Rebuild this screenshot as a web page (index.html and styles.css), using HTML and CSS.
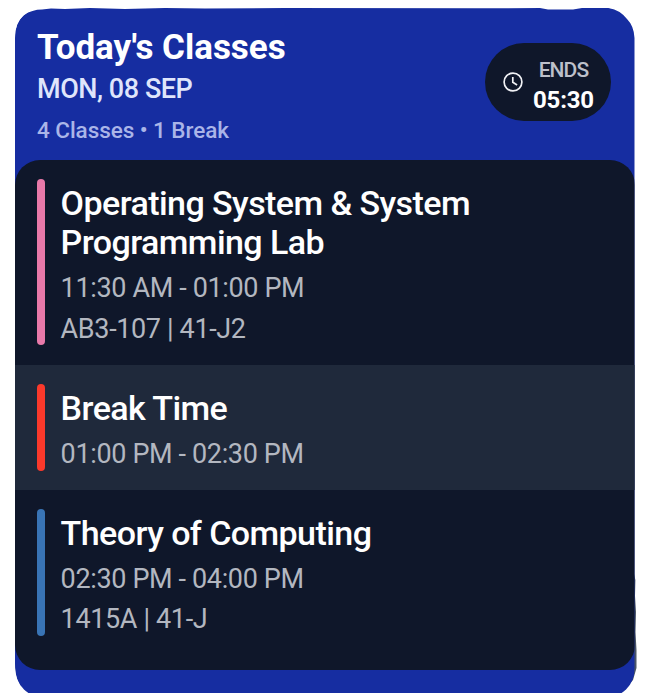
FILE: index.html
```html
<!DOCTYPE html>
<html lang="en">
<head>
<meta charset="utf-8">
<title>Today's Classes</title>
<link rel="stylesheet" href="styles.css">
</head>
<body>
<svg class="edge" viewBox="0 0 653 693" aria-hidden="true">
  <path class="edge-shadow" d="M634 574L635.4 580 635 596 636 612 635.5 632 636.5 650 636.5 668 633 680 625 689 618 694 600 694 626 660Z"/>
  <path class="edge-shadow" d="M15 660L16 673 22 685 34 694 60 694 30 660Z"/>
</svg>
<main class="card">
  <header class="header">
    <div class="summary">
      <h1 class="title">Today's Classes</h1>
      <p class="date">MON, 08 SEP</p>
      <p class="count">4 Classes • 1 Break</p>
    </div>
    <div class="ends">
      <svg class="clock" viewBox="0 0 20 20" fill="none" stroke="currentColor" stroke-width="1.7">
        <circle cx="10" cy="10" r="8.9"/>
        <path d="M9.8 4.9v5.4l4.3 2.6"/>
      </svg>
      <div class="ends-text">
        <span class="ends-label">ENDS</span>
        <span class="ends-time">05:30</span>
      </div>
    </div>
  </header>
  <section class="list">
    <article class="item item-lab">
      <div class="bar pink"></div>
      <div class="info">
        <h2 class="name">Operating System &amp; System<br>Programming Lab</h2>
        <p class="meta">11:30 AM - 01:00 PM</p>
        <p class="meta">AB3-107 | 41-J2</p>
      </div>
    </article>
    <article class="item item-break">
      <div class="bar red"></div>
      <div class="info">
        <h2 class="name">Break Time</h2>
        <p class="meta">01:00 PM - 02:30 PM</p>
      </div>
    </article>
    <article class="item item-theory">
      <div class="bar blue"></div>
      <div class="info">
        <h2 class="name">Theory of Computing</h2>
        <p class="meta">02:30 PM - 04:00 PM</p>
        <p class="meta">1415A | 41-J</p>
      </div>
    </article>
  </section>
</main>
</body>
</html>
```

FILE: styles.css
```css
* { box-sizing: border-box; margin: 0; padding: 0; }
body {
  height: 693px;
  padding: 8px 18.5px 0 15px;
  overflow: hidden;
  background: #fff;
  font-family: Roboto, sans-serif;
  color: #fff;
}
.edge { position: absolute; left: 0; top: 0; width: 653px; height: 693px; }
.edge-shadow { fill: #4a5566; }
.card {
  position: relative;
  height: 690px;
  border-radius: 27px 27px 30px 30px;
  background: #162da1;
  overflow: hidden;
  clip-path: path("M0 30Q0 14 9 7Q17 1.5 27 1.5L36 0.4 50 1 75 0 110 1 150 0 190 0.6 270 0 460 0.3 525 0 533 1.4 558 1.4 567 0 594 0Q605 2 612 11Q619 18 619.5 30V660Q619.5 690 589 690H30Q0 690 0 655Z");
}
.header {
  height: 152px;
  display: flex;
  justify-content: space-between;
  align-items: flex-start;
  padding: 19px 23.5px 0 22px;
}
.title { font-size: 35px; line-height: 42px; font-weight: 700; letter-spacing: -0.03px; white-space: nowrap; }
.date { font-size: 27px; line-height: 40px; font-weight: 500; letter-spacing: -0.45px; color: #dfe5fb; white-space: nowrap; }
.count { margin-top: 1px; font-size: 22.5px; line-height: 40px; font-weight: 500; letter-spacing: -0.06px; color: #aab5e8; white-space: nowrap; }
.ends {
  width: 126px;
  height: 78px;
  margin-top: 16px;
  padding-left: 18px;
  display: flex;
  align-items: center;
  gap: 10px;
  border-radius: 39px;
  background: #0f172a;
}
.clock { width: 20px; height: 20px; flex: none; color: #f0f1f5; }
.ends-text { display: flex; flex-direction: column; align-items: center; padding-top: 7px; }
.ends-label { font-size: 21px; line-height: 30px; font-weight: 500; letter-spacing: -0.9px; color: #bdc0ca; }
.ends-time { font-size: 24px; line-height: 31px; font-weight: 700; letter-spacing: -0.2px; }
.list { border-radius: 25px; overflow: hidden; background: #0f172a; }
.item { display: flex; gap: 16px; padding: 19px 22px 0; }
.item-lab { height: 204.5px; padding-bottom: 19.5px; }
.item-break { height: 125px; padding-bottom: 19px; background: #1f293b; }
.item-theory { height: 180px; padding-bottom: 33.5px; }
.bar { width: 8px; flex: none; border-radius: 4px; }
.pink { background: #e879a9; }
.red { background: #fb392b; }
.blue { background: #3974b5; }
.info { padding-top: 5px; white-space: nowrap; }
.name { margin: 0 0 6px -0.4px; font-size: 34px; line-height: 39px; font-weight: 500; letter-spacing: -0.57px; }
.meta { margin-left: -0.4px; font-size: 27px; line-height: 40.5px; font-weight: 400; letter-spacing: -0.36px; color: #b3b7c0; }
```
